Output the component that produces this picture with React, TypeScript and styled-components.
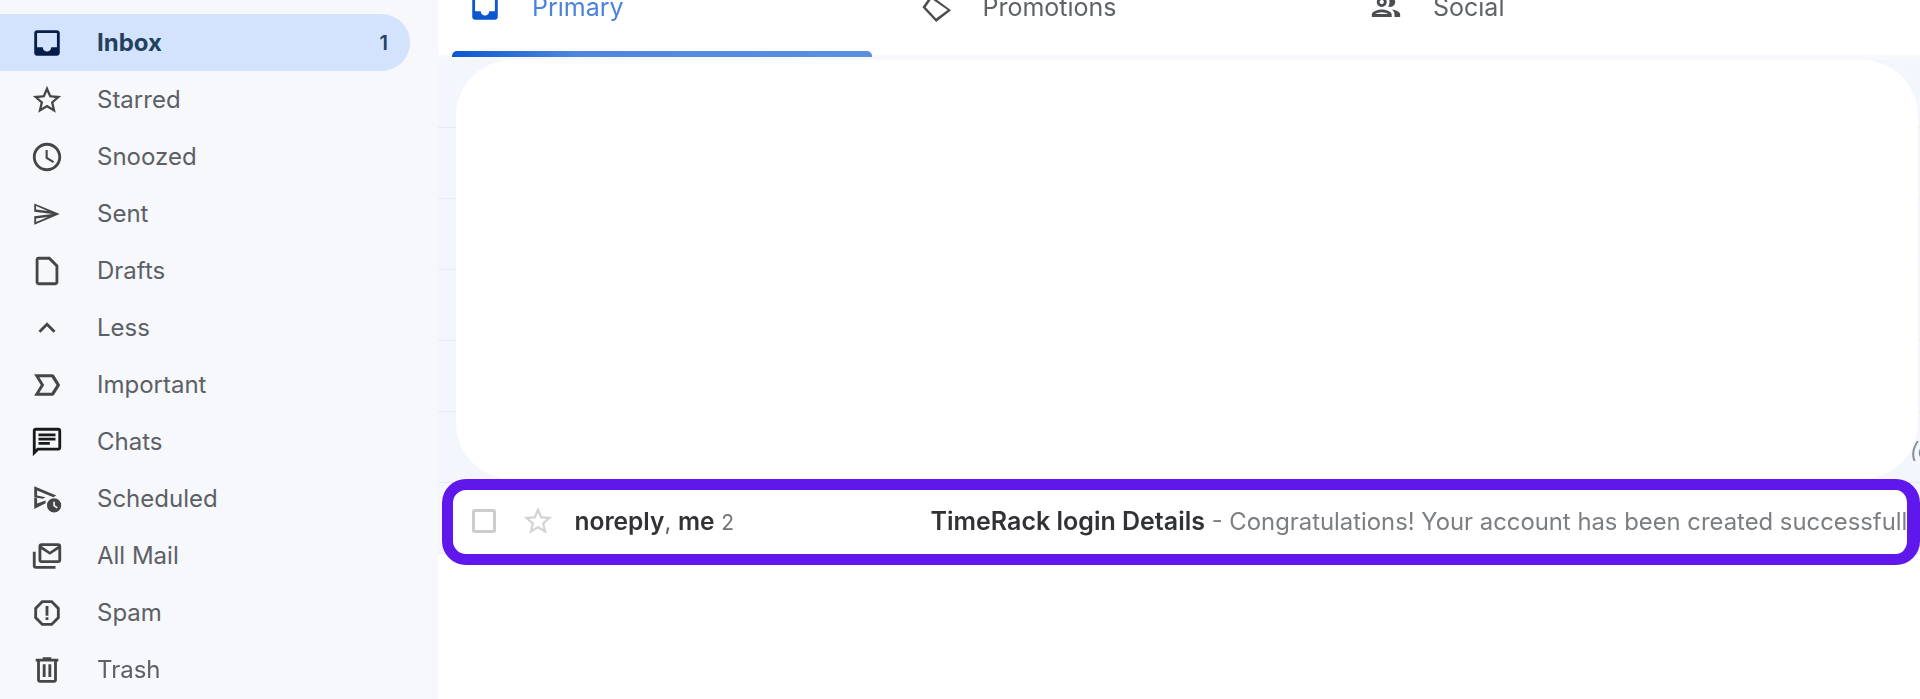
import React from 'react';
import styled, { createGlobalStyle } from 'styled-components';

const GlobalStyle = createGlobalStyle`
  html, body {
    margin: 0;
    height: 699px;
    overflow: hidden;
    background: #ffffff;
    font-family: Inter, Roboto, "Liberation Sans", sans-serif;
  }
`;

const ICONS: Record<string, string> = {
  inbox:
    'M19 3H4.99C3.88 3 3 3.9 3 5v14c0 1.1.88 2 1.99 2H19c1.1 0 2-.9 2-2V5c0-1.1-.9-2-2-2zm0 12h-4c0 1.66-1.35 3-3 3s-3-1.34-3-3H4.99V5H19v10z',
  star:
    'M22 9.24l-7.19-.62L12 2 9.19 8.63 2 9.24l5.46 4.73L5.82 21 12 17.27 18.18 21l-1.63-7.03L22 9.24zM12 15.4l-3.76 2.27 1-4.28-3.32-2.88 4.38-.38L12 6.1l1.71 4.04 4.38.38-3.32 2.88 1 4.28L12 15.4z',
  clock:
    'M11.99 2C6.47 2 2 6.48 2 12s4.47 10 9.99 10C17.52 22 22 17.52 22 12S17.52 2 11.99 2zM12 20c-4.42 0-8-3.58-8-8s3.58-8 8-8 8 3.58 8 8-3.58 8-8 8zm.5-13H11v6l5.25 3.15.75-1.23-4.5-2.67z',
  send: 'M3 4.5v5.83L15.86 12 3 13.67v5.83L21 12 3 4.5zm1.3 1.9l8.3 3.5-8.3-1.1V6.4zm8.3 7.7l-8.3 3.5v-2.4l8.3-1.1z',
  draft: 'M6 2c-1.1 0-1.99.9-1.99 2L4 20c0 1.1.89 2 1.99 2H18c1.1 0 2-.9 2-2V8l-6-6H6zm0 18V4h7.17L18 8.83V20H6z',
  less: 'M12 8l-6 6 1.41 1.41L12 10.83l4.59 4.58L18 14z',
  important:
    'M15.5 19.6H2.9L7.6 12 2.9 4.4h12.6c.7 0 1.3.3 1.7.9L21.3 12l-4.1 6.7c-.4.6-1 .9-1.7.9zM6.6 17.5h8.6l3.5-5.5-3.5-5.5H6.6l3.4 5.5-3.4 5.5z',
  chat: 'M20 2H4c-1.1 0-2 .9-2 2v18l4-4h14c1.1 0 2-.9 2-2V4c0-1.1-.9-2-2-2zm0 14H5.17L4 17.17V4h16v12zM6 12h8v2H6zM6 9h12v2H6zM6 6h12v2H6z',
  scheduled:
    'M3 3l15.5 6.6-2 1.1L5 6v3.6l6 1.2-2 1-6-1zM3 19v-8l2 .4v3.8l6-2.2v2zM17 11.5a5 5 0 1 0 0 10 5 5 0 0 0 0-10zm1.9 7.2L16.4 17v-3h1.2v2.4l2 1.4z',
  allMail:
    'M20 3H8c-1.1 0-2 .9-2 2v10c0 1.1.9 2 2 2h12c1.1 0 2-.9 2-2V5c0-1.1-.9-2-2-2zm0 12H8V7.2l6 4 6-4V15zm-6-6L8.2 5h11.6L14 9zM4 9H2v10c0 1.1.9 2 2 2h14v-2H4V9z',
  spam: 'M15.73 3H8.27L3 8.27v7.46L8.27 21h7.46L21 15.73V8.27L15.73 3zM19 14.9L14.9 19H9.1L5 14.9V9.1L9.1 5h5.8L19 9.1v5.8zM11 7h2v7h-2zM11 15h2v2h-2z',
  trash: 'M15 4V3H9v1H4v2h1v13c0 1.1.9 2 2 2h10c1.1 0 2-.9 2-2V6h1V4h-5zm2 15H7V6h10v13zM9 8h2v9H9zm4 0h2v9h-2z',
  people:
    'M9 13.75c-2.34 0-7 1.17-7 3.5V19h14v-1.75c0-2.33-4.66-3.5-7-3.5zM4.34 17c.84-.58 2.87-1.25 4.66-1.25s3.82.67 4.66 1.25H4.34zM9 12c1.93 0 3.5-1.57 3.5-3.5S10.93 5 9 5 5.5 6.57 5.5 8.5 7.07 12 9 12zm0-5c.83 0 1.5.67 1.5 1.5S9.83 10 9 10s-1.5-.67-1.5-1.5S8.17 7 9 7zm7.04 6.81c1.16.84 1.96 1.96 1.96 3.44V19h4v-1.75c0-2.02-3.5-3.17-5.96-3.44zM15 12c1.93 0 3.5-1.57 3.5-3.5S16.93 5 15 5c-.54 0-1.04.13-1.5.35.63.89 1 1.98 1 3.15s-.37 2.26-1 3.15c.46.22.96.35 1.5.35z',
  tag: 'M8.4 3.8L22.6 14.3 12.1 22.6 2.4 12.1zM8.8 6.2L4.7 12.1 12.1 20.2 20.2 14.1z',
};

const NAV = [
  { label: 'Inbox', icon: 'inbox', active: true, count: '1' },
  { label: 'Starred', icon: 'star' },
  { label: 'Snoozed', icon: 'clock' },
  { label: 'Sent', icon: 'send' },
  { label: 'Drafts', icon: 'draft' },
  { label: 'Less', icon: 'less' },
  { label: 'Important', icon: 'important' },
  { label: 'Chats', icon: 'chat', dark: true },
  { label: 'Scheduled', icon: 'scheduled' },
  { label: 'All Mail', icon: 'allMail' },
  { label: 'Spam', icon: 'spam' },
  { label: 'Trash', icon: 'trash' },
];

const TABS = [
  { label: 'Primary', icon: 'inbox', active: true },
  { label: 'Promotions', icon: 'tag' },
  { label: 'Social', icon: 'people' },
];

const Icon = ({ name, className }: { name: string; className?: string }) => (
  <svg className={className} viewBox="0 0 24 24" fill="currentColor" aria-hidden="true">
    <path d={ICONS[name]} />
  </svg>
);

const App = () => {
  return (
    <Page>
      <GlobalStyle />
      <Sidebar>
        {NAV.map((item) => (
          <NavRow key={item.label} $active={item.active}>
            <NavIcon name={item.icon} $active={item.active} $dark={item.dark} />
            <NavLabel $active={item.active}>{item.label}</NavLabel>
            {item.count && <NavCount>{item.count}</NavCount>}
          </NavRow>
        ))}
      </Sidebar>
      <Main>
        <TabBar>
          {TABS.map((tab) => (
            <Tab key={tab.label} $active={tab.active}>
              <TabIcon name={tab.icon} />
              <span>{tab.label}</span>
              {tab.active && <TabUnderline />}
            </Tab>
          ))}
        </TabBar>
        <TabDivider />
        <ListArea>
          <BlankCard>
            <CutOffText>(c</CutOffText>
          </BlankCard>
          <HighlightBox>
            <CheckBox />
            <RowStar name="star" />
            <Sender>
              <strong>noreply</strong>, <strong>me</strong> <ThreadCount>2</ThreadCount>
            </Sender>
            <Preview>
              <strong>TimeRack login Details</strong>
              <Snippet> - Congratulations! Your account has been created successfully</Snippet>
            </Preview>
          </HighlightBox>
        </ListArea>
      </Main>
    </Page>
  );
};

const Page = styled.div`
  display: flex;
  width: 1920px;
  height: 699px;
  overflow: hidden;
  filter: blur(0.55px);
`;

const Sidebar = styled.nav`
  flex: 0 0 438px;
  padding-top: 14px;
  box-sizing: border-box;
  background: #f6f8fc;
`;

const NavRow = styled.div<{ $active?: boolean }>`
  display: flex;
  align-items: center;
  width: 410px;
  height: 57px;
  padding: 0 22px 0 30px;
  box-sizing: border-box;
  border-radius: 0 29px 29px 0;
  background: ${(p) => (p.$active ? '#d3e3fd' : 'transparent')};
`;

const NavIcon = styled(Icon)<{ $active?: boolean; $dark?: boolean }>`
  flex: 0 0 34px;
  width: 34px;
  height: 34px;
  color: ${(p) => (p.$active ? '#041e49' : p.$dark ? '#1a1a1a' : '#444746')};
`;

const NavLabel = styled.span<{ $active?: boolean }>`
  flex: 1;
  margin-left: 33px;
  font-size: 24px;
  font-weight: ${(p) => (p.$active ? 700 : 400)};
  color: ${(p) => (p.$active ? '#23405f' : '#5c6065')};
`;

const NavCount = styled.span`
  font-size: 20px;
  font-weight: 600;
  color: #23405f;
`;

const Main = styled.main`
  flex: 1;
  min-width: 0;
  display: flex;
  flex-direction: column;
`;

const TabBar = styled.div`
  display: flex;
  height: 55px;
  padding-left: 14px;
  background: #ffffff;
`;

const Tab = styled.div<{ $active?: boolean }>`
  position: relative;
  display: flex;
  align-items: center;
  gap: 30px;
  flex: 0 0 450.5px;
  height: 52px;
  margin-top: -19px;
  padding-left: 16px;
  box-sizing: border-box;
  font-size: 25px;
  color: ${(p) => (p.$active ? '#4a82dc' : '#5f6368')};

  svg {
    color: ${(p) => (p.$active ? '#0b57d0' : '#4a4d50')};
  }
`;

const TabIcon = styled(Icon)`
  flex: 0 0 34px;
  width: 34px;
  height: 34px;
`;

const TabUnderline = styled.div`
  position: absolute;
  left: 0;
  top: 70px;
  z-index: 1;
  width: 420px;
  height: 6px;
  border-radius: 5px 5px 0 0;
  background: linear-gradient(90deg, #0b57d0 0%, #4f86de 30%, #5a8fe0 100%);
`;

const TabDivider = styled.div`
  height: 5px;
  background: #f6f8fc;
`;

const ListArea = styled.div`
  height: 494px;
  padding-left: 4px;
  background-color: #f3f6fc;
  background-image: repeating-linear-gradient(
    to bottom,
    transparent 0,
    transparent 67px,
    #e9ebf0 67px,
    #e9ebf0 68px,
    transparent 68px,
    transparent 71px
  );
`;

const BlankCard = styled.div`
  position: relative;
  width: 1462px;
  height: 419px;
  margin-left: 14px;
  border-radius: 56px;
  background: #ffffff;
`;

const CutOffText = styled.span`
  position: absolute;
  left: 1454px;
  top: 377px;
  font-size: 22px;
  font-style: italic;
  color: #8a8d91;
`;

const HighlightBox = styled.div`
  display: flex;
  align-items: center;
  width: 1478px;
  height: 86px;
  padding: 0 0 2px 19px;
  box-sizing: border-box;
  overflow: hidden;
  border: 11px solid #5f17eb;
  border-right-width: 13px;
  border-radius: 24px;
  background: #ffffff;
  font-size: 23.85px;
  white-space: nowrap;
  color: #5f6368;
`;

const CheckBox = styled.span`
  flex: 0 0 24px;
  height: 24px;
  box-sizing: border-box;
  border: 3px solid #cdcdcd;
  border-radius: 3px;
`;

const RowStar = styled(Icon)`
  flex: 0 0 34px;
  width: 34px;
  height: 34px;
  margin-left: 25px;
  color: #d4d4d4;
`;

const Sender = styled.div`
  flex: 0 0 356px;
  margin-left: 19.5px;
  color: #5f6368;

  strong {
    font-size: 24.5px;
    font-weight: 600;
    color: #303236;
  }
`;

const ThreadCount = styled.span`
  font-size: 21px;
  color: #6f7276;
`;

const Preview = styled.div`
  flex: 1;
  min-width: 0;
  overflow: hidden;

  strong {
    font-size: 25px;
    font-weight: 600;
    color: #303236;
  }
`;

const Snippet = styled.span`
  color: #7b7e82;
`;

export default App;
